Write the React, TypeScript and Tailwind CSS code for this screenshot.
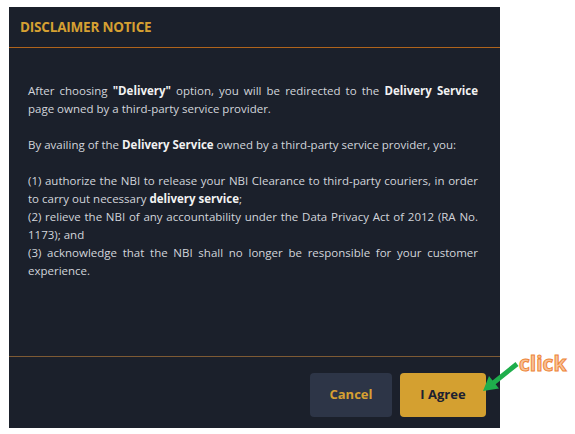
import React from 'react';

const App: React.FC = () => {
  return (
    <div className="relative w-[575px] h-[434px] bg-white overflow-hidden pt-[7px] pl-[9px]" style={{ fontFamily: '"Open Sans", "Noto Sans", sans-serif' }}>
      {/* Modal */}
      <div className="w-[491px] h-[421px] bg-[#1b202b] flex flex-col">
        <div className="h-[41px] border-b border-[#b0641c] flex items-center px-[11px]">
          <h2 className="text-[13.5px] font-bold text-[#d6a032] tracking-[-0.2px]">DISCLAIMER NOTICE</h2>
        </div>

        <div className="h-[308px] pt-[34px] pl-[19px] pr-[22px] text-[11.5px] leading-[18px] text-[#d2d5db] text-justify">
          <p>
            After choosing <b className="text-[#f2f2f2]">"Delivery"</b> option, you will be redirected to the <b className="text-[#f2f2f2]">Delivery Service</b> page owned by a third-party service provider.
          </p>
          <br />
          <p>
            By availing of the <b className="text-[#f2f2f2]">Delivery Service</b> owned by a third-party service provider, you:
          </p>
          <br />
          <p>
            (1) authorize the NBI to release your NBI Clearance to third-party couriers, in order to carry out necessary <b className="text-[#f2f2f2]">delivery service</b>;
            <br />
            (2) relieve the NBI of any accountability under the Data Privacy Act of 2012 (RA No. 1173); and
            <br />
            (3) acknowledge that the NBI shall no longer be responsible for your customer experience.
          </p>
        </div>

        <div className="flex-1 border-t border-[#7e5a34] flex justify-end items-start gap-2 pt-[16px] pr-[14px]">
          <button className="w-[82px] h-[44px] rounded bg-[#2d3547] text-[#d6a032] text-[13px] font-bold">Cancel</button>
          <button className="w-[86px] h-[44px] rounded bg-[#d4a030] text-[#1c2130] text-[13px] font-bold">I Agree</button>
        </div>
      </div>

      {/* Annotation */}
      <svg className="absolute inset-0 pointer-events-none" width="575" height="434" viewBox="0 0 575 434">
        <polygon
          points="483,391 499,388.5 495.6,384.2 518.5,366 515.5,362 492.5,380.4 489,376"
          fill="#1fae4c"
        />
      </svg>
      <span className="absolute left-[519px] top-[349px] text-[21px] leading-[28px] font-bold text-[#f8c29a] [-webkit-text-stroke:1px_#ee8638] pointer-events-none">
        click
      </span>
    </div>
  );
};

export default App;
